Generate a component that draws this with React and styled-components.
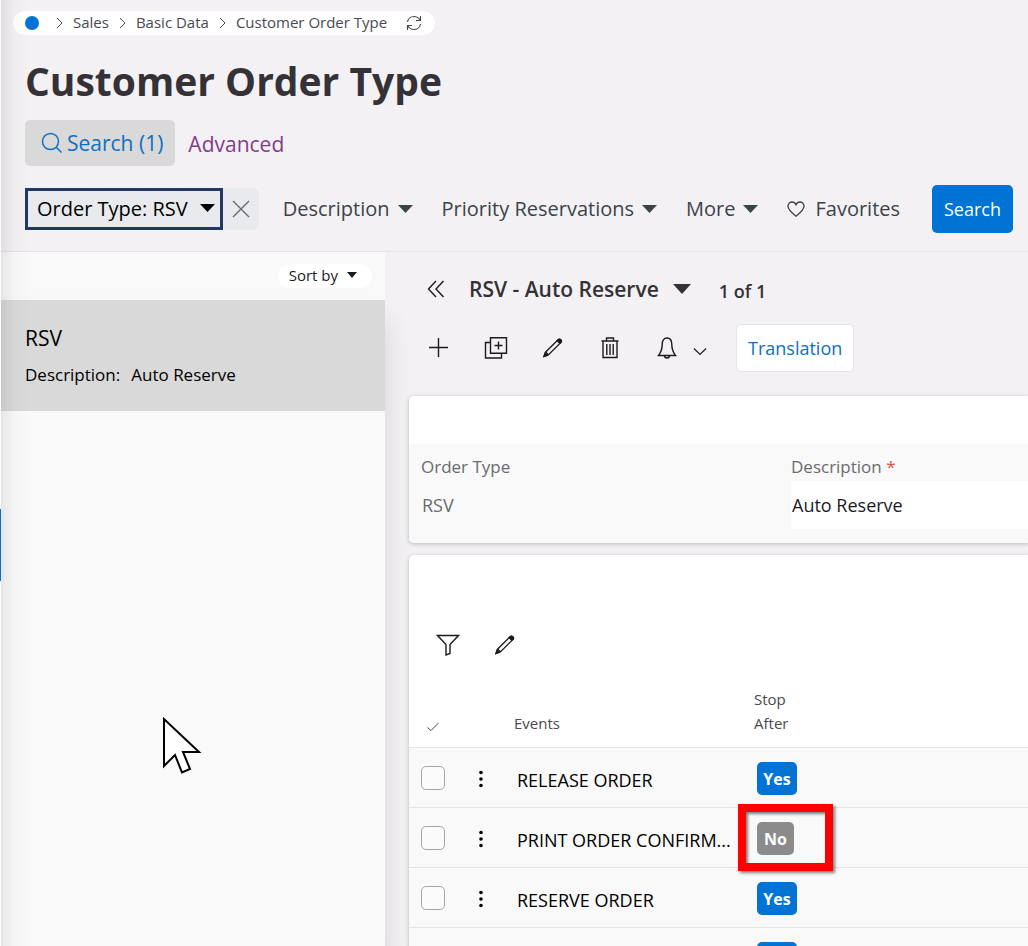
import React from 'react';
import styled, { createGlobalStyle } from 'styled-components';

const GlobalStyle = createGlobalStyle`
  * {
    box-sizing: border-box;
  }

  body {
    margin: 0;
    background: #f3f1f4;
    color: #000;
    font-family: 'Open Sans', 'Noto Sans', sans-serif;
  }

  button, input {
    font-family: inherit;
  }
`;

const Page = styled.div`
  position: relative;
  display: flex;
  flex-direction: column;
  height: 100vh;
  overflow: hidden;
  border-left: 1px solid #fafafa;
`;

const EdgeShadow = styled.div`
  position: absolute;
  inset: 0 auto 0 0;
  z-index: 2;
  width: 28px;
  background: linear-gradient(to right, rgba(0, 0, 0, 0.08), rgba(0, 0, 0, 0.02) 45%, transparent);
  pointer-events: none;
`;

const EdgeHandle = styled.div`
  position: fixed;
  left: 0;
  top: 509px;
  width: 1px;
  height: 72px;
  background: #0f6fbe;
`;

const Pointer = styled.svg`
  position: absolute;
  left: 161px;
  top: 716px;
  z-index: 2;
  pointer-events: none;
`;

const Header = styled.header`
  flex: none;
  padding: 11px 15px 18px 24px;
  border-bottom: 1px solid #e4e3e6;
`;

const Breadcrumbs = styled.nav`
  display: flex;
  align-items: center;
  width: fit-content;
  height: 24px;
  margin-left: -12px;
  padding: 0 12px 2px;
  gap: 9px;
  border-radius: 12px;
  background: #fff;
  color: #4a4a4f;
  font-size: 15px;
  line-height: 22px;
`;

const Crumb = styled.a`
  color: #4a4a4f;
  text-decoration: none;
`;

const HomeDot = styled.a`
  width: 14px;
  height: 14px;
  margin: 2px 7px 0 0;
  border-radius: 50%;
  background: #0073d5;
`;

const IconButton = styled.button`
  display: flex;
  align-items: center;
  justify-content: center;
  flex: none;
  width: ${props => props.$width || 24}px;
  height: 24px;
  padding: 0;
  border: 0;
  background: none;
  color: ${props => props.$color || '#1b1b1f'};
`;

const RefreshButton = styled(IconButton)`
  margin: 2px 1px 0 10px;
`;

const Title = styled.h1`
  margin: 18px 0 12px;
  color: #343236;
  font-size: 39px;
  font-weight: 700;
  line-height: 55px;
`;

const ModeRow = styled.div`
  display: flex;
  align-items: center;
  gap: 13px;
`;

const SearchMode = styled.button`
  display: flex;
  align-items: center;
  gap: 4px;
  height: 46px;
  padding: 0 12px 0 16px;
  border: 0;
  border-radius: 5px;
  background: #d9d9da;
  color: #0f6fc0;
  font-size: 21px;
`;

const AdvancedLink = styled.a`
  padding-top: 2px;
  color: #843c8b;
  font-size: 21px;
  text-decoration: none;
`;

const FilterRow = styled.div`
  display: flex;
  align-items: center;
  height: 48px;
  margin-top: 19px;
`;

const ActiveFilter = styled.div`
  display: flex;
  align-items: center;
  flex: none;
  height: 42px;
  margin-right: 24px;
  border-radius: 5px;
  background: #e9eaee;
`;

const ActiveFilterButton = styled.button`
  display: flex;
  align-items: center;
  gap: 12px;
  height: 42px;
  padding: 0 5px 2px 9px;
  border: 3px solid #1f3864;
  background: none;
  color: #000;
  font-size: 20px;
  white-space: nowrap;
`;

const Filters = styled.div`
  display: flex;
  flex: none;
  gap: 29px;
`;

const FilterButton = styled.button`
  display: flex;
  align-items: center;
  gap: ${props => props.$gap || 8}px;
  padding: 0;
  border: 0;
  background: none;
  color: #3a4448;
  font-size: 20px;
  line-height: 28px;
  white-space: nowrap;
`;

const PrimaryButton = styled.button`
  flex: none;
  height: 48px;
  margin-left: auto;
  padding: 0 12px;
  border: 0;
  border-radius: 5px;
  background: #0073d5;
  color: #fff;
  font-size: 18px;
`;

const Body = styled.div`
  display: flex;
  flex: 1;
  min-height: 0;
  overflow: hidden;
`;

const Sidebar = styled.aside`
  display: flex;
  flex-direction: column;
  flex: none;
  width: 384px;
  background: #f9f9f9;
`;

const SortBar = styled.div`
  display: flex;
  align-items: center;
  justify-content: flex-end;
  height: 48px;
  padding-right: 13px;
`;

const SortButton = styled.button`
  display: flex;
  align-items: center;
  gap: 9px;
  height: 24px;
  padding: 0 15px 2px 11px;
  border: 0;
  border-radius: 12px;
  background: #fff;
  color: #1b1b1f;
  font-size: 15px;
`;

const List = styled.div`
  flex: 1;
  background: #f9f9f9;
  box-shadow: 0 20px 26px rgba(0, 0, 0, 0.12);
`;

const ListItem = styled.div`
  padding: 24px 24px 24px;
  background: #d9d9d9;
`;

const ItemTitle = styled.div`
  font-size: 21px;
  line-height: 28px;
`;

const ItemLine = styled.div`
  display: flex;
  gap: 11px;
  margin-top: 11px;
  font-size: 17px;
  line-height: 24px;
`;

const Detail = styled.main`
  flex: 1;
  min-width: 0;
  padding: 23px 0 0 24px;
`;

const DetailHeader = styled.div`
  display: flex;
  align-items: center;
  height: 28px;
  padding-left: 15px;
  color: #343236;
`;

const RecordButton = styled.button`
  display: flex;
  align-items: center;
  gap: 14px;
  margin: 0 28px 0 21px;
  padding: 0;
  border: 0;
  background: none;
  color: inherit;
  font-size: 21px;
  font-weight: 600;
  line-height: 28px;
`;

const RecordCount = styled.span`
  padding-top: 4px;
  font-size: 18px;
  font-weight: 600;
  line-height: 24px;
`;

const Toolbar = styled.div`
  display: flex;
  align-items: center;
  gap: 33px;
  height: 48px;
  margin: 21px 0 24px;
  padding-left: 18px;
`;

const BellGroup = styled.div`
  display: flex;
  gap: 9px;
  margin-right: -9px;
`;

const SecondaryButton = styled.button`
  height: 48px;
  padding: 0 11px;
  border: 1px solid #e4e3e6;
  border-radius: 5px;
  background: #fff;
  color: #0f6fc0;
  font-size: 18px;
`;

const Card = styled.section`
  position: relative;
  margin-bottom: 12px;
  border-radius: 5px 0 0 5px;
  background: #fff;
  box-shadow: 0 1px 4px rgba(0, 0, 0, 0.25);
`;

const Fields = styled.div`
  display: grid;
  grid-template-columns: 370px 1fr;
  padding: 11px 0 14px 12px;
  border-radius: 0 0 0 5px;
  background: #f9f9f9;
`;

const Field = styled.label`
  color: #6b6b6e;
  font-size: 17px;
  line-height: 24px;
`;

const Required = styled.span`
  color: #e0503c;
`;

const FieldInput = styled.input`
  display: block;
  width: 100%;
  height: 48px;
  margin-top: 2px;
  padding: 0 1px;
  border: 0;
  background: ${props => (props.readOnly ? 'transparent' : '#fff')};
  color: ${props => (props.readOnly ? '#6b6b6e' : '#1b1b1f')};
  font-size: 18px;
`;

const CardSpacer = styled.div`
  height: 48px;
`;

const TableToolbar = styled.div`
  display: flex;
  gap: 33px;
  padding: 30px 0 27px 27px;
`;

const Table = styled.table`
  width: 100%;
  border-collapse: separate;
  border-spacing: 0;
  table-layout: fixed;
`;

const Col = styled.col`
  width: ${props => (props.$width ? `${props.$width}px` : 'auto')};
`;

const Th = styled.th`
  height: 64px;
  padding: 0 9px 12px;
  border-bottom: 1px solid #e4e4e6;
  color: #4a4a4f;
  font-size: 15px;
  font-weight: 400;
  line-height: 24px;
  text-align: left;
  vertical-align: bottom;
`;

const CheckTh = styled(Th)`
  padding: 0 17px 15px;
  line-height: 0;
`;

const Td = styled.td`
  height: 60px;
  padding: 0 12px;
  border-bottom: 1px solid #e4e4e6;
  background: #f9f9f9;
  font-size: 18px;
  white-space: nowrap;
  vertical-align: middle;
`;

const EventName = styled.div`
  padding-top: 4px;
  line-height: 24px;
`;

const Checkbox = styled.input`
  display: block;
  width: 24px;
  height: 24px;
  margin: 0;
  appearance: none;
  border: 1px solid #a6a6a8;
  border-radius: 5px;
  background: #fbfbfb;
`;

const BadgeHolder = styled.div`
  position: relative;
  display: flex;
  padding-top: 2px;
`;

const Badge = styled.span`
  min-width: ${props => (props.$on ? 40 : 37)}px;
  height: 33px;
  padding: 0 6px;
  border-radius: 5px;
  background: ${props => (props.$on ? '#0073d5' : '#8b8b8b')};
  color: #fff;
  font-size: 16px;
  font-weight: 700;
  line-height: 34px;
  text-align: center;
`;

const Highlight = styled.div`
  position: absolute;
  left: -19px;
  top: -16px;
  z-index: 1;
  width: 95px;
  height: 67px;
  border: 8px solid #fe0000;
  box-shadow: 2px 2px 3px rgba(0, 0, 0, 0.5), inset 2px 2px 3px rgba(0, 0, 0, 0.5);
`;

const Icon = ({ width = 24, height = 24, stroke = 1.4, children }) => (
  <svg
    width={width}
    height={height}
    viewBox={`0 0 ${width} ${height}`}
    fill="none"
    stroke="currentColor"
    strokeWidth={stroke}
    aria-hidden="true"
  >
    {children}
  </svg>
);

const Caret = ({ width = 15, height = 8 }) => (
  <Icon width={width} height={height} stroke={0}>
    <path d={`M0 0H${width}L${width / 2} ${height}Z`} fill="currentColor" />
  </Icon>
);

const CrumbArrow = () => (
  <Icon width={9} height={14} stroke={1}>
    <path d="M2 3l5 5-5 5" />
  </Icon>
);

const PencilIcon = () => (
  <Icon stroke={1.3}>
    <path d="M3 20.500l1.500-4.300L17.300 3.600c1.700-1.200 4 .9 2.900 2.600L7.300 18.900z" />
    <path d="M17.300 3.600c1.700-1.200 4 .9 2.900 2.600l-1.300 1.200-2.800-2.600zM3 20.500l1.100-3.100 2.100 1.900z" fill="currentColor" />
    <path d="M4.800 16.200l2.600 2.500" />
  </Icon>
);

const events = [
  { id: 1, name: 'RELEASE ORDER', stop: true, label: 'Yes' },
  { id: 2, name: 'PRINT ORDER CONFIRM...', stop: false, label: 'No', highlighted: true },
  { id: 3, name: 'RESERVE ORDER', stop: true, label: 'Yes' },
  { id: 4, name: '', stop: true, label: '' },
];

const filters = ['Description', 'Priority Reservations', 'More'];

const PageHeader = () => (
  <Header>
    <Breadcrumbs aria-label="Breadcrumb">
      <HomeDot href="#home" aria-label="Home" />
      <CrumbArrow />
      <Crumb href="#sales">Sales</Crumb>
      <CrumbArrow />
      <Crumb href="#basic-data">Basic Data</Crumb>
      <CrumbArrow />
      <Crumb href="#order-type">Customer Order Type</Crumb>
      <RefreshButton $width={16} $color="#4a4a4f" aria-label="Refresh">
        <Icon width={16} height={16} stroke={1.2}>
          <path d="M1.500 7C2 3.500 5 1.500 8 1.500c2.500 0 4.500 1.200 6 3.500M14.500 1v4.500H10M14.500 9c-.5 3.500-3.500 5.500-6.500 5.500-2.500 0-4.500-1.200-6-3.500M1.500 15v-4.500H6" />
        </Icon>
      </RefreshButton>
    </Breadcrumbs>
    <Title>Customer Order Type</Title>
    <ModeRow>
      <SearchMode>
        <Icon width={22} height={22} stroke={1.5}>
          <circle cx="9.500" cy="9.500" r="8" />
          <path d="M15 15l5.500 5.500" />
        </Icon>
        Search (1)
      </SearchMode>
      <AdvancedLink href="#advanced">Advanced</AdvancedLink>
    </ModeRow>
    <FilterRow>
      <ActiveFilter>
        <ActiveFilterButton>
          Order Type: RSV
          <Caret />
        </ActiveFilterButton>
        <IconButton $width={36} $color="#69696d" aria-label="Remove filter">
          <Icon width={18} height={18}>
            <path d="M1 1l16 16M17 1L1 17" />
          </Icon>
        </IconButton>
      </ActiveFilter>
      <Filters>
        {filters.map(name => (
          <FilterButton key={name}>
            {name}
            <Caret />
          </FilterButton>
        ))}
        <FilterButton $gap={10}>
          <Icon width={18} height={16} stroke={1.3}>
            <path d="M9 15.200C5 12 1 9 1 5.300 1 2.800 2.800 1 5 1c1.800 0 3.200 1 4 2.700C9.800 2 11.200 1 13 1c2.200 0 4 1.800 4 4.300C17 9 13 12 9 15.200z" />
          </Icon>
          Favorites
        </FilterButton>
      </Filters>
      <PrimaryButton>Search</PrimaryButton>
    </FilterRow>
  </Header>
);

const RecordToolbar = () => (
  <Toolbar>
    <IconButton aria-label="New">
      <Icon>
        <path d="M11.500 2v19M2 11.500h19" />
      </Icon>
    </IconButton>
    <IconButton aria-label="Duplicate">
      <Icon>
        <path d="M6.500 1.800h16v15.500h-16zM6.500 6.500h-5v15.500h16v-4.700M14.500 5.500v8M10.500 9.500h8" />
      </Icon>
    </IconButton>
    <IconButton aria-label="Edit">
      <PencilIcon />
    </IconButton>
    <IconButton aria-label="Delete">
      <Icon>
        <path d="M3.500 5h17M5 5v16.500h14V5M8.500 5V2h7v3M8.800 8v11M12 8v11M15.200 8v11" />
      </Icon>
    </IconButton>
    <BellGroup>
      <IconButton aria-label="Notifications">
        <Icon>
          <path d="M3.500 19.500c3-4 3.700-6 3.700-11C7.200 4 9 2 12 2s4.800 2 4.800 6.500c0 5 .7 7 3.700 11zM9.500 19.500c0 3.300 5 3.300 5 0" />
        </Icon>
      </IconButton>
      <IconButton aria-label="Notification options">
        <Icon stroke={1.2}>
          <path d="M6 12.500l6 6 6-6" />
        </Icon>
      </IconButton>
    </BellGroup>
    <SecondaryButton>Translation</SecondaryButton>
  </Toolbar>
);

const EventRow = ({ name, stop, label, highlighted }) => (
  <tr>
    <Td>
      <Checkbox type="checkbox" aria-label={`Select ${name}`} />
    </Td>
    <Td>
      <IconButton aria-label={`Actions for ${name}`}>
        <Icon stroke={0}>
          <g fill="#000">
            <circle cx="12" cy="6.500" r="1.800" />
            <circle cx="12" cy="13" r="1.800" />
            <circle cx="12" cy="19.500" r="1.800" />
          </g>
        </Icon>
      </IconButton>
    </Td>
    <Td>
      <EventName>{name}</EventName>
    </Td>
    <Td>
      <BadgeHolder>
        <Badge $on={stop}>{label}</Badge>
        {highlighted && <Highlight />}
      </BadgeHolder>
    </Td>
  </tr>
);

const EventsCard = () => (
  <Card>
    <CardSpacer />
    <TableToolbar>
      <IconButton aria-label="Filter">
        <Icon>
          <path d="M1.500 2.500h21L14 11.500v9L10 22V11.500z" />
        </Icon>
      </IconButton>
      <IconButton aria-label="Edit events">
        <PencilIcon />
      </IconButton>
    </TableToolbar>
    <Table>
      <colgroup>
        <Col $width={48} />
        <Col $width={48} />
        <Col $width={240} />
        <Col />
      </colgroup>
      <thead>
        <tr>
          <CheckTh aria-label="Selected">
            <Icon width={14} height={10} stroke={1}>
              <path d="M1.500 5.500L5 8.500 12.500 1" />
            </Icon>
          </CheckTh>
          <Th aria-label="Actions" />
          <Th>Events</Th>
          <Th>
            Stop
            <br />
            After
          </Th>
        </tr>
      </thead>
      <tbody>
        {events.map(event => (
          <EventRow key={event.id} {...event} />
        ))}
      </tbody>
    </Table>
  </Card>
);

export default function App() {
  return (
    <Page>
      <GlobalStyle />
      <PageHeader />
      <Body>
        <Sidebar>
          <SortBar>
            <SortButton>
              Sort by
              <Caret width={10} height={6} />
            </SortButton>
          </SortBar>
          <List>
            <ListItem>
              <ItemTitle>RSV</ItemTitle>
              <ItemLine>
                <span>Description:</span>
                <span>Auto Reserve</span>
              </ItemLine>
            </ListItem>
          </List>
        </Sidebar>
        <Detail>
          <DetailHeader>
            <IconButton aria-label="Collapse list">
              <Icon width={18} height={18}>
                <path d="M9 1L1.500 9 9 17M16.500 1L9 9l7.500 8" />
              </Icon>
            </IconButton>
            <RecordButton>
              RSV - Auto Reserve
              <Caret width={18} height={10} />
            </RecordButton>
            <RecordCount>1 of 1</RecordCount>
          </DetailHeader>
          <RecordToolbar />
          <Card>
            <CardSpacer />
            <Fields>
              <Field>
                Order Type
                <FieldInput readOnly value="RSV" />
              </Field>
              <Field>
                Description <Required>*</Required>
                <FieldInput defaultValue="Auto Reserve" />
              </Field>
            </Fields>
          </Card>
          <EventsCard />
        </Detail>
      </Body>
      <EdgeShadow />
      <EdgeHandle />
      <Pointer width="42" height="60" viewBox="0 0 42 60" fill="#fff" stroke="#000" strokeWidth="2">
        <path d="M2 3V50L13 39l7 17.500 8-3.500-7-17H37z" />
      </Pointer>
    </Page>
  );
}
